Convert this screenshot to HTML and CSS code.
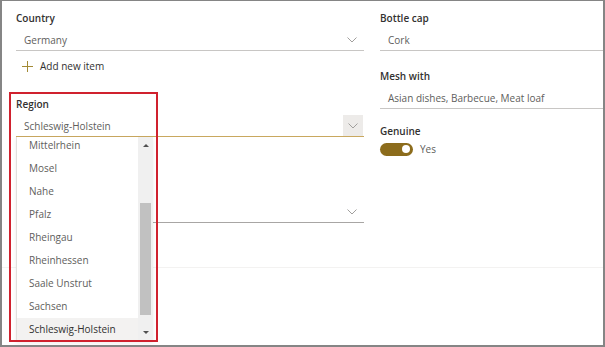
FILE: index.html
```html
<!DOCTYPE html>
<html lang="en">
<head>
    <meta charset="UTF-8">
    <meta name="viewport" content="width=device-width, initial-scale=1.0">
    <title>Wine form</title>
    <link rel="stylesheet" href="styles.css">
</head>
<body>
    <div class="frame">
        <div class="form">
            <div class="column">
                <div class="field">
                    <label>Country</label>
                    <div class="input">
                        <span>Germany</span>
                        <svg class="chevron" width="10" height="6" viewBox="0 0 10 6"><polyline points="0.5,0.5 5,5 9.5,0.5"/></svg>
                    </div>
                </div>
                <div class="add-item">
                    <svg width="11" height="11" viewBox="0 0 11 11"><path d="M5.5 0 V11 M0 5.5 H11"/></svg>
                    <span>Add new item</span>
                </div>
                <div class="field region">
                    <label>Region</label>
                    <div class="input focused">
                        <span>Schleswig-Holstein</span>
                        <span class="drop-btn">
                            <svg class="chevron" width="10" height="6" viewBox="0 0 10 6"><polyline points="0.5,0.5 5,5 9.5,0.5"/></svg>
                        </span>
                    </div>
                    <div class="listbox">
                        <ul class="options">
                            <li>Mittelrhein</li>
                            <li>Mosel</li>
                            <li>Nahe</li>
                            <li>Pfalz</li>
                            <li>Rheingau</li>
                            <li>Rheinhessen</li>
                            <li>Saale Unstrut</li>
                            <li>Sachsen</li>
                            <li class="selected">Schleswig-Holstein</li>
                        </ul>
                        <div class="scrollbar">
                            <div class="sb-btn"><span class="arrow-up"></span></div>
                            <div class="sb-track"><div class="sb-thumb"></div></div>
                            <div class="sb-btn"><span class="arrow-down"></span></div>
                        </div>
                    </div>
                    <div class="highlight"></div>
                </div>
                <div class="field hidden-field">
                    <div class="label-space"></div>
                    <div class="input">
                        <span></span>
                        <svg class="chevron" width="10" height="6" viewBox="0 0 10 6"><polyline points="0.5,0.5 5,5 9.5,0.5"/></svg>
                    </div>
                </div>
            </div>
            <div class="column">
                <div class="field">
                    <label>Bottle cap</label>
                    <div class="input"><span>Cork</span></div>
                </div>
                <div class="field mesh">
                    <label>Mesh with</label>
                    <div class="input"><span>Asian dishes, Barbecue, Meat loaf</span></div>
                </div>
                <div class="field genuine">
                    <label>Genuine</label>
                    <div class="toggle-row">
                        <span class="toggle"><span class="knob"></span></span>
                        <span class="toggle-text">Yes</span>
                    </div>
                </div>
            </div>
        </div>
        <div class="separator"></div>
    </div>
</body>
</html>
```

FILE: styles.css
```css
body {
    margin: 0;
    font-family: "Open Sans", "Noto Sans", sans-serif;
    font-size: 10px;
    color: #323130;
    background: #fff;
}
.frame {
    width: 605px;
    height: 347px;
    box-sizing: border-box;
    border: 2px solid #858585;
    border-top-width: 1px;
    overflow: hidden;
}
.form {
    display: grid;
    grid-template-columns: 348px 1fr;
    column-gap: 16px;
    padding: 9px 0 0 14px;
}
.field {
    position: relative;
}
.field label {
    display: block;
    height: 16px;
    line-height: 16px;
    font-weight: 600;
    color: #323130;
}
.label-space {
    height: 16px;
}
.input {
    display: flex;
    align-items: center;
    justify-content: space-between;
    margin-top: 3px;
    height: 22px;
    box-sizing: border-box;
    padding: 0 7px 0 8px;
    border-bottom: 1px solid #c8c6c4;
    color: #605e5c;
}
.input.focused {
    border-bottom-color: #c9a85f;
    padding-right: 1px;
}
.chevron {
    fill: none;
    stroke: #a19f9d;
    stroke-width: 1;
}
.drop-btn {
    display: flex;
    align-items: center;
    justify-content: center;
    width: 20px;
    height: 21px;
    background: #edebe9;
}
.add-item {
    display: flex;
    align-items: center;
    gap: 7px;
    height: 16px;
    margin-top: 7px;
    padding-left: 6px;
    color: #323130;
}
.add-item svg {
    stroke: #a38a35;
    stroke-width: 1;
}
.region {
    margin-top: 22px;
}
.listbox {
    position: absolute;
    top: 41px;
    left: 0;
    width: 137px;
    height: 204px;
    display: flex;
    background: #fff;
    border-left: 1px solid #e1dfdd;
    box-sizing: border-box;
    overflow: hidden;
    box-shadow: 0 2px 4px rgba(0, 0, 0, 0.08);
    z-index: 2;
}
.options {
    flex: 1;
    list-style: none;
    margin: -3px 0 0;
    padding: 0;
}
.options li {
    height: 23px;
    line-height: 23px;
    padding-left: 12px;
    color: #605e5c;
}
.options li.selected {
    background: #f3f2f1;
    color: #323130;
}
.scrollbar {
    display: flex;
    flex-direction: column;
    width: 15px;
    background: #f0f0f0;
}
.sb-btn {
    height: 17px;
    display: flex;
    align-items: center;
    justify-content: center;
}
.arrow-up,
.arrow-down {
    width: 0;
    height: 0;
    border-left: 3px solid transparent;
    border-right: 3px solid transparent;
}
.arrow-up {
    border-bottom: 3px solid #505050;
}
.arrow-down {
    border-top: 3px solid #505050;
}
.sb-track {
    flex: 1;
    padding: 49px 2px 0;
}
.sb-thumb {
    height: 112px;
    background: #c1c1c1;
}
.highlight {
    position: absolute;
    left: -7px;
    top: -4px;
    width: 149px;
    height: 250px;
    box-sizing: border-box;
    border: 2px solid #d0212e;
    z-index: 3;
}
.hidden-field {
    margin-top: 45px;
}
.hidden-field .input {
    border-bottom-color: #a8a6a4;
}
.mesh {
    margin-top: 17px;
}
.genuine {
    margin-top: 14px;
}
.toggle-row {
    display: flex;
    align-items: center;
    gap: 7px;
    margin-top: 3px;
    height: 14px;
}
.toggle {
    display: flex;
    align-items: center;
    justify-content: flex-end;
    width: 33px;
    height: 13px;
    border-radius: 7px;
    background: #8c6c1c;
    padding-right: 3px;
    box-sizing: border-box;
}
.knob {
    width: 8px;
    height: 8px;
    border-radius: 50%;
    background: #fff;
}
.toggle-text {
    color: #605e5c;
}
.separator {
    margin-top: 44px;
    height: 1px;
    background: #f3f2f1;
}
```
